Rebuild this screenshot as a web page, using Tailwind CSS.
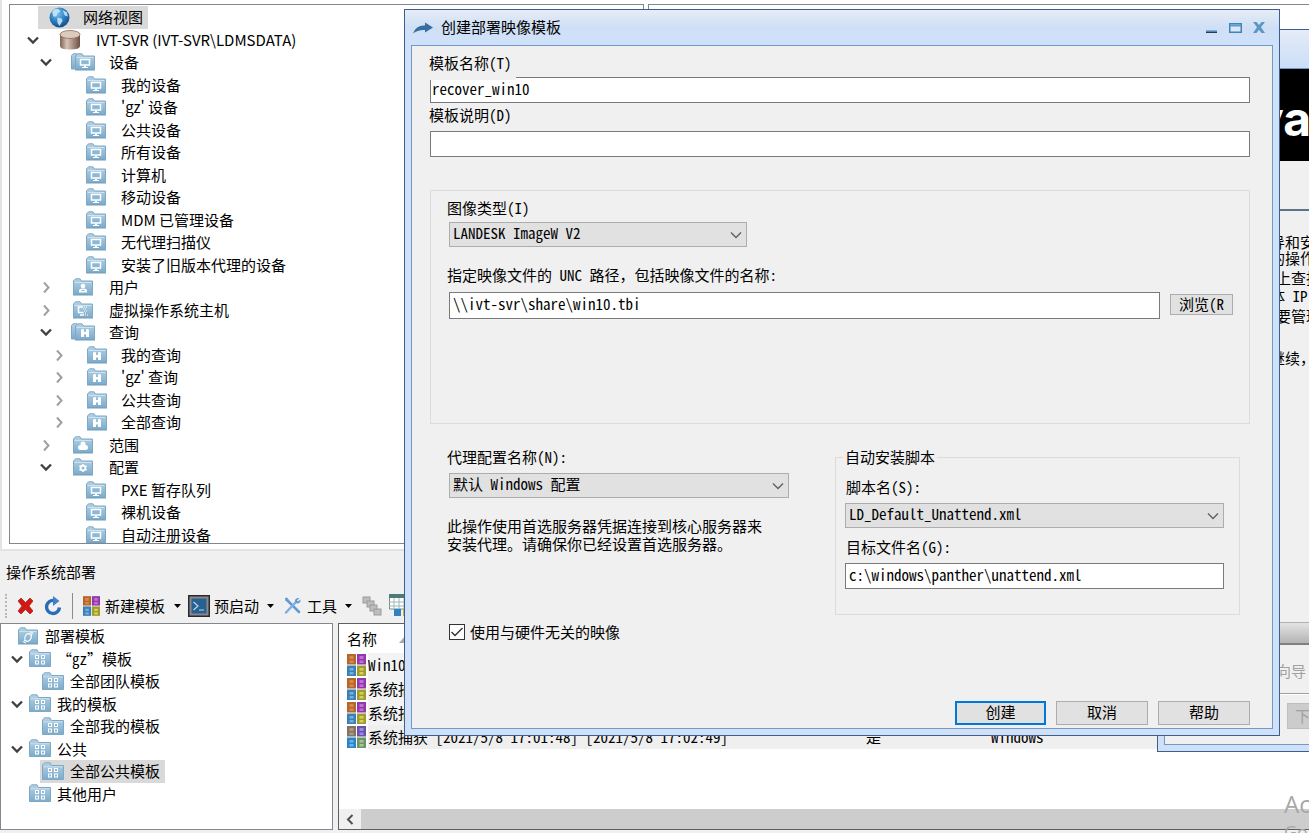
<!DOCTYPE html>
<html lang="zh-CN">
<head>
<meta charset="utf-8">
<title>创建部署映像模板</title>
<script src="https://cdn.jsdelivr.net/npm/@tailwindcss/browser@4"></script>
</head>
<body class="font-['Noto_Sans_CJK_SC',sans-serif] text-[15px] leading-4 text-black">
<svg width="0" height="0" class="absolute" aria-hidden="true">
  <defs>
    <linearGradient id="fg" x1="0" y1="0" x2="0" y2="1"><stop offset="0" stop-color="#b4d2e6"/><stop offset="1" stop-color="#7cabcb"/></linearGradient>
    <radialGradient id="globe" cx=".4" cy=".3" r=".8"><stop offset="0" stop-color="#7cc3ee"/><stop offset=".5" stop-color="#2d7fc0"/><stop offset="1" stop-color="#0b4076"/></radialGradient>
    <linearGradient id="db" x1="0" x2="1"><stop offset="0" stop-color="#7d6152"/><stop offset=".35" stop-color="#d9c3b5"/><stop offset="1" stop-color="#6b5041"/></linearGradient>
  </defs>
  <symbol id="folder" viewBox="0 0 20 18"><path d="M.5 16.500V3L2.500 .8H7L8.500 3H19.500V16.500Z" fill="url(#fg)" stroke="#7fa8c4"/><path d="M1.500 4.500H18.500" stroke="#cfe2ef" fill="none"/><path d="M0 17H20" stroke="#6f9dbd"/></symbol>
  <symbol id="folder-pc" viewBox="0 0 20 18"><use href="#folder" width="20" height="18"/><rect x="5.500" y="6.500" width="9" height="5.500" fill="#8ab8d6" stroke="#fff" stroke-width="1.500"/><path d="M9 12.500H11V14H13V15H7V14H9Z" fill="#fff"/></symbol>
  <symbol id="folders-pc" viewBox="0 0 24 18"><path d="M.5 16V2.500L2 .8H6L7.500 2.500H12V16Z" fill="url(#fg)" stroke="#7fa8c4"/><use href="#folder-pc" x="4" width="20" height="18"/></symbol>
  <symbol id="folder-q" viewBox="0 0 20 18"><use href="#folder" width="20" height="18"/><path d="M6 7L7 6H8.500L9 7V9H11V7L11.500 6H13L14 7V14H11V11.500H9V14H6Z" fill="#fff"/></symbol>
  <symbol id="folders-q" viewBox="0 0 24 18"><path d="M.5 16V2.500L2 .8H6L7.500 2.500H12V16Z" fill="url(#fg)" stroke="#7fa8c4"/><use href="#folder-q" x="4" width="20" height="18"/></symbol>
  <symbol id="folder-user" viewBox="0 0 20 18"><use href="#folder" width="20" height="18"/><circle cx="10" cy="8" r="2.300" fill="#fff"/><path d="M6 14.500V12.500Q6 10.500 10 10.500T14 12.500V14.500Z" fill="#fff"/><path d="M8.500 12.500H11.500" stroke="#8ab8d6"/></symbol>
  <symbol id="folder-vm" viewBox="0 0 20 18"><use href="#folder" width="20" height="18"/><path d="M10 6H5.500V11.500H10M7 14H11" stroke="#fff" stroke-width="1.500" fill="none"/><path d="M11 6H15M10 8H14M11 10H15M10 12H14M12 14H15" stroke="#fff" stroke-dasharray="1 1"/></symbol>
  <symbol id="folder-scope" viewBox="0 0 20 18"><use href="#folder" width="20" height="18"/><circle cx="10" cy="8" r="2.500" fill="#fff"/><circle cx="7.500" cy="11.500" r="2.500" fill="#fff"/><circle cx="12.500" cy="11.500" r="2.500" fill="#fff"/><path d="M7 11H13V14H7Z" fill="#fff"/></symbol>
  <symbol id="folder-gear" viewBox="0 0 20 18"><use href="#folder" width="20" height="18"/><circle cx="10" cy="10" r="2.400" fill="none" stroke="#fff" stroke-width="1.800"/><path d="M10 6V8M10 12V14M6.500 8L8.300 9M11.700 11L13.500 12M6.500 12L8.300 11M11.700 9L13.500 8" stroke="#fff" stroke-width="1.500"/></symbol>
  <symbol id="folder-sync" viewBox="0 0 20 18"><use href="#folder" width="20" height="18"/><ellipse cx="10" cy="10.500" rx="3" ry="4" fill="none" stroke="#fff" stroke-width="1.200" transform="rotate(25 10 10.500)"/><path d="M12 5L14.500 5.500L13.500 8M8 16L5.500 15L7 13" stroke="#fff" fill="none"/></symbol>
  <symbol id="folder-tpl" viewBox="0 0 22 19"><path d="M.5 17.500V3L2.500 .8H8L9.500 3.500H21.500V17.500Z" fill="url(#fg)" stroke="#7fa8c4"/><path d="M1.500 4.800H20.500" stroke="#cfe2ef"/><g fill="#8ab8d6" stroke="#fff"><rect x="6.500" y="6.500" width="3" height="3"/><rect x="12.500" y="6.500" width="3" height="3"/><rect x="6.500" y="12" width="3" height="3"/><rect x="12.500" y="12" width="3" height="3"/></g></symbol>
  <symbol id="down" viewBox="0 0 14 14"><path d="M2 4.500L7 9.500L12 4.500" fill="none" stroke="#404040" stroke-width="2.300"/></symbol>
  <symbol id="right" viewBox="0 0 14 14"><path d="M5 2.500L9.500 7.500L5 12.500" fill="none" stroke="#a0a0a0" stroke-width="2"/></symbol>
  <symbol id="four" viewBox="0 0 19 22"><rect x="0" y="0" width="9" height="10.500" fill="#b8652a"/><rect x="10" y="0" width="9" height="10.500" fill="#9138ad"/><rect x="0" y="11.500" width="9" height="10.500" fill="#3a7fb5"/><rect x="10" y="11.500" width="9" height="10.500" fill="#a09a32"/><g><path d="M2.500 2H6.500V5H2.500ZM2.500 6.500H6.500V9H2.500Z" fill="#d08c50"/><path d="M12.500 2H16.500V5H12.500ZM12.500 6.500H16.500V9H12.500Z" fill="#c070d4"/><path d="M2.500 14H6.500V16.500H2.500ZM2.500 18H6.500V20.500H2.500Z" fill="#70b0dc"/><path d="M12.500 14H16.500V16.500H12.500ZM12.500 18H16.500V20.500H12.500Z" fill="#d6d24c"/></g></symbol>
  <symbol id="four-sel" viewBox="0 0 19 22"><rect width="9" height="10.500" fill="#857360"/><rect x="10" width="9" height="10.500" fill="#6a50b0"/><rect y="11.500" width="9" height="10.500" fill="#2d82c4"/><rect x="10" y="11.500" width="9" height="10.500" fill="#6c9468"/><path d="M2.500 2H6.500V5H2.500ZM2.500 6.500H6.500V9H2.500Z" fill="#a89a88"/><path d="M12.500 2H16.500V5H12.500ZM12.500 6.500H16.500V9H12.500Z" fill="#9c88dc"/><path d="M2.500 14H6.500V16.500H2.500ZM2.500 18H6.500V20.500H2.500Z" fill="#6ab4ee"/><path d="M12.500 14H16.500V16.500H12.500ZM12.500 18H16.500V20.500H12.500Z" fill="#a4c890"/></symbol>
  <symbol id="combo" viewBox="0 0 12 8"><path d="M1 1.500L6 6.500L11 1.500" fill="none" stroke="#606060" stroke-width="1.400"/></symbol>
  <symbol id="tri" viewBox="0 0 7 4"><path d="M0 0H7L3.500 4Z" fill="#000"/></symbol>
</svg>

<div class="relative flex h-screen flex-col overflow-hidden bg-[#f0f0f0]">
  <!-- network view -->
  <main class="flex h-[551px] shrink-0 gap-1 border-b-2 border-l-2 border-[#e3e3e3] bg-white pt-1 pb-[5px] pl-[7px]">
    <nav class="w-[635px] shrink-0 overflow-hidden border border-[#828790]" aria-label="网络视图">
      <ul class="mt-px flex h-[540px] flex-col whitespace-nowrap">
        <li class="flex flex-1 items-center"><span class="ml-7 flex h-full items-center bg-[#d9d9d9] pr-[5px] pl-2"><svg class="mr-[13px] ml-[3px] size-[21px]" viewBox="0 0 20 20"><circle cx="10" cy="10" r="9.500" fill="url(#globe)"/><path d="M3 4Q6 1 9 2L11 4L8 6L7 9L4 9ZM8 10L12 11L13 13L10 18L8 15ZM13 3L17 5L18 9L15 8Z" fill="#cfeafc" opacity=".85"/></svg>网络视图</span></li>
        <li class="flex flex-1 items-center pl-4"><span class="w-8"><svg class="size-[14px]"><use href="#down"/></svg></span><svg class="mr-[14px] h-5 w-6" viewBox="0 0 24 20"><path d="M2 4V16Q2 19.500 12 19.500T22 16V4Z" fill="url(#db)"/><ellipse cx="12" cy="4.500" rx="10" ry="4" fill="#dccabd" stroke="#8a6f5f" stroke-width=".8"/></svg>IVT-SVR (IVT-SVR\LDMSDATA)</li>
        <li class="flex flex-1 items-center pl-[29px]"><span class="w-8"><svg class="size-[14px]"><use href="#down"/></svg></span><svg class="mr-[14px] h-[18px] w-6"><use href="#folders-pc"/></svg>设备</li>
        <li class="flex flex-1 items-center pl-[74px]"><svg class="mr-[13px] h-[18px] w-6"><use href="#folder-pc"/></svg>我的设备</li>
        <li class="flex flex-1 items-center pl-[74px]"><svg class="mr-[13px] h-[18px] w-6"><use href="#folder-pc"/></svg>'gz' 设备</li>
        <li class="flex flex-1 items-center pl-[74px]"><svg class="mr-[13px] h-[18px] w-6"><use href="#folder-pc"/></svg>公共设备</li>
        <li class="flex flex-1 items-center pl-[74px]"><svg class="mr-[13px] h-[18px] w-6"><use href="#folder-pc"/></svg>所有设备</li>
        <li class="flex flex-1 items-center pl-[74px]"><svg class="mr-[13px] h-[18px] w-6"><use href="#folder-pc"/></svg>计算机</li>
        <li class="flex flex-1 items-center pl-[74px]"><svg class="mr-[13px] h-[18px] w-6"><use href="#folder-pc"/></svg>移动设备</li>
        <li class="flex flex-1 items-center pl-[74px]"><svg class="mr-[13px] h-[18px] w-6"><use href="#folder-pc"/></svg>MDM 已管理设备</li>
        <li class="flex flex-1 items-center pl-[74px]"><svg class="mr-[13px] h-[18px] w-6"><use href="#folder-pc"/></svg>无代理扫描仪</li>
        <li class="flex flex-1 items-center pl-[74px]"><svg class="mr-[13px] h-[18px] w-6"><use href="#folder-pc"/></svg>安装了旧版本代理的设备</li>
        <li class="flex flex-1 items-center pl-[29px]"><span class="w-8"><svg class="size-[14px]"><use href="#right"/></svg></span><svg class="mr-[14px] h-[18px] w-6"><use href="#folder-user"/></svg>用户</li>
        <li class="flex flex-1 items-center pl-[29px]"><span class="w-8"><svg class="size-[14px]"><use href="#right"/></svg></span><svg class="mr-[14px] h-[18px] w-6"><use href="#folder-vm"/></svg>虚拟操作系统主机</li>
        <li class="flex flex-1 items-center pl-[29px]"><span class="w-8"><svg class="size-[14px]"><use href="#down"/></svg></span><svg class="mr-[14px] h-[18px] w-6"><use href="#folders-q"/></svg>查询</li>
        <li class="flex flex-1 items-center pl-[42px]"><span class="w-[33px]"><svg class="size-[14px]"><use href="#right"/></svg></span><svg class="mr-3 h-[18px] w-6"><use href="#folder-q"/></svg>我的查询</li>
        <li class="flex flex-1 items-center pl-[42px]"><span class="w-[33px]"><svg class="size-[14px]"><use href="#right"/></svg></span><svg class="mr-3 h-[18px] w-6"><use href="#folder-q"/></svg>'gz' 查询</li>
        <li class="flex flex-1 items-center pl-[42px]"><span class="w-[33px]"><svg class="size-[14px]"><use href="#right"/></svg></span><svg class="mr-3 h-[18px] w-6"><use href="#folder-q"/></svg>公共查询</li>
        <li class="flex flex-1 items-center pl-[42px]"><span class="w-[33px]"><svg class="size-[14px]"><use href="#right"/></svg></span><svg class="mr-3 h-[18px] w-6"><use href="#folder-q"/></svg>全部查询</li>
        <li class="flex flex-1 items-center pl-[29px]"><span class="w-8"><svg class="size-[14px]"><use href="#right"/></svg></span><svg class="mr-[14px] h-[18px] w-6"><use href="#folder-scope"/></svg>范围</li>
        <li class="flex flex-1 items-center pl-[29px]"><span class="w-8"><svg class="size-[14px]"><use href="#down"/></svg></span><svg class="mr-[14px] h-[18px] w-6"><use href="#folder-gear"/></svg>配置</li>
        <li class="flex flex-1 items-center pl-[74px]"><svg class="mr-[13px] h-[18px] w-6"><use href="#folder-pc"/></svg>PXE 暂存队列</li>
        <li class="flex flex-1 items-center pl-[74px]"><svg class="mr-[13px] h-[18px] w-6"><use href="#folder-pc"/></svg>裸机设备</li>
        <li class="flex flex-1 items-center pl-[74px]"><svg class="mr-[13px] h-[18px] w-6"><use href="#folder-pc"/></svg>自动注册设备</li>
      </ul>
    </nav>
    <div class="flex-1 border-t border-l border-[#828790]"></div>
  </main>

  <!-- OS deployment -->
  <section class="flex min-h-0 flex-1 flex-col pb-[3px]">
    <h2 class="mt-[13px] pl-[6px]">操作系统部署</h2>
    <div class="mt-2 flex h-[35px] shrink-0 items-center whitespace-nowrap">
      <span class="ml-[5px] h-6 w-[3px] border-l-2 border-dotted border-[#b8b8b8]"></span>
      <button aria-label="删除" class="ml-[9px]"><svg class="h-4 w-[17px]" viewBox="0 0 17 16"><path d="M1 3L4 0L8.500 4.500L13 0L16 3L12 8L16 13L13 16L8.500 11.500L4 16L1 13L5 8Z" fill="#d11a14" stroke="#9b0d0d" stroke-width=".6"/></svg></button>
      <button aria-label="刷新" class="ml-[10px]"><svg class="h-5 w-[18px]" viewBox="0 0 18 20"><path d="M10 4.500A6.500 6.500 0 1 0 15.500 11.500" fill="none" stroke="#2b6cb8" stroke-width="3.400"/><path d="M9 0L15.500 5L9 10Z" fill="#3f80c8"/></svg></button>
      <span class="ml-[10px] h-[26px] w-px bg-[#8c8c8c]"></span>
      <button class="ml-[10px] flex items-center gap-[5px]"><svg class="h-5 w-[17px]"><use href="#four"/></svg>新建模板<svg class="ml-1 h-1 w-[7px]"><use href="#tri"/></svg></button>
      <button class="ml-[7px] flex items-center gap-1"><svg class="size-[22px]" viewBox="0 0 22 22"><rect width="22" height="22" fill="#2a2a2e"/><rect x="1.500" y="1.500" width="19" height="19" fill="#8a8a8e"/><rect x="3.500" y="3.500" width="15" height="15" fill="#28608f"/><path d="M5.500 7L10 11L5.500 15M11 15H16" stroke="#b8d8f0" stroke-width="1.200" fill="none"/></svg>预启动<svg class="ml-1 h-1 w-[7px]"><use href="#tri"/></svg></button>
      <button class="ml-[10px] flex items-center gap-[6px]"><svg class="size-[17px]" viewBox="0 0 17 17"><path d="M4 4L15 15" stroke="#5e9bd6" stroke-width="2.500" stroke-linecap="round"/><path d="M1 1L3 .5L5 3L4 5L1.500 4Z" fill="#5e9bd6"/><path d="M2 15.500L12 5" stroke="#7db0e2" stroke-width="2.500" stroke-linecap="round"/><path d="M15.500 1L13 3.500L14 4.500L16.500 2.500Q17 6 13.500 6.500Q10.500 6 11 3Q12 .5 15.500 1Z" fill="#5e9bd6"/></svg>工具<svg class="ml-[2px] h-1 w-[7px]"><use href="#tri"/></svg></button>
      <svg class="ml-[10px] size-5" viewBox="0 0 20 20" fill="#bdbdbd" stroke="#9a9a9a"><rect x="1" y="1" width="7" height="6"/><rect x="5" y="5" width="7" height="6"/><rect x="8" y="9" width="7" height="6"/><rect x="12" y="13" width="7" height="6"/></svg>
      <svg class="ml-[7px] h-[23px] w-6" viewBox="0 0 24 23"><path d="M.5 .5H23.500V15H.5Z" fill="#fff" stroke="#6a8f8c"/><path d="M0 0H24V4H0Z" fill="#4d7d78"/><path d="M0 8H24M0 12H24M5 4V15M10 4V15M15 4V15" stroke="#9fb9b6"/><path d="M5 15H12V22H5Z" fill="#2f83c4"/><path d="M14 15H21V22H14Z" fill="#d8a92f"/></svg>
    </div>
    <div class="flex min-h-0 flex-1 gap-[5px]">
      <nav class="w-[333px] shrink-0 border border-[#828790] bg-white" aria-label="部署模板">
        <ul class="mt-px flex h-[180px] flex-col whitespace-nowrap">
          <li class="flex flex-1 items-center pl-[17px]"><svg class="mr-[7px] h-[18px] w-5"><use href="#folder-sync"/></svg>部署模板</li>
          <li class="flex flex-1 items-center pl-[9px]"><svg class="mr-[5px] size-[14px]"><use href="#down"/></svg><svg class="mr-[6px] h-[19px] w-[22px]"><use href="#folder-tpl"/></svg><span class="font-['Noto_Sans_Mono_CJK_SC','Noto_Sans_CJK_SC',monospace]">“gz”模板</span></li>
          <li class="flex flex-1 items-center pl-[41px]"><svg class="mr-[6px] h-[19px] w-[22px]"><use href="#folder-tpl"/></svg>全部团队模板</li>
          <li class="flex flex-1 items-center pl-[9px]"><svg class="mr-[5px] size-[14px]"><use href="#down"/></svg><svg class="mr-[6px] h-[19px] w-[22px]"><use href="#folder-tpl"/></svg>我的模板</li>
          <li class="flex flex-1 items-center pl-[41px]"><svg class="mr-[6px] h-[19px] w-[22px]"><use href="#folder-tpl"/></svg>全部我的模板</li>
          <li class="flex flex-1 items-center pl-[9px]"><svg class="mr-[5px] size-[14px]"><use href="#down"/></svg><svg class="mr-[6px] h-[19px] w-[22px]"><use href="#folder-tpl"/></svg>公共</li>
          <li class="flex flex-1 items-center pl-[39px]"><span class="flex h-full items-center bg-[#d9d9d9] pr-[5px] pl-[2px]"><svg class="mr-[6px] h-[19px] w-[22px]"><use href="#folder-tpl"/></svg>全部公共模板</span></li>
          <li class="flex flex-1 items-center pl-7"><svg class="mr-[6px] h-[19px] w-[22px]"><use href="#folder-tpl"/></svg>其他用户</li>
        </ul>
      </nav>
      <div class="flex min-w-0 flex-1 flex-col justify-between border border-r-0 border-[#606060] bg-white font-['Noto_Sans_Mono_CJK_SC','Noto_Sans_CJK_SC',monospace]">
        <table class="w-full table-fixed border-collapse text-left whitespace-nowrap">
          <thead><tr class="h-[29px]">
            <th class="w-[527px] pl-2 font-normal"><span class="flex items-center gap-[22px]">名称<svg class="h-2 w-[14px]" viewBox="0 0 14 8"><path d="M7 0L14 8H0Z" fill="#a8a8a8"/></svg></span></th>
            <th class="w-[125px]"></th><th></th></tr></thead>
          <tbody>
            <tr class="h-6"><td class="pl-2"><span class="flex h-6 items-center"><svg class="mr-[2px] h-[22px] w-[19px]"><use href="#four"/></svg><span class="flex h-6 flex-1 items-center bg-[#f3f3f3]">Win10</span></span></td><td class="bg-[#f3f3f3]"></td><td class="bg-[#f3f3f3]"></td></tr>
            <tr class="h-6"><td class="pl-2"><span class="flex h-6 items-center"><svg class="mr-[2px] h-[22px] w-[19px]"><use href="#four"/></svg><span class="flex h-6 flex-1 items-center bg-[#f3f3f3]">系统捕获</span></span></td><td class="bg-[#f3f3f3]"></td><td class="bg-[#f3f3f3]"></td></tr>
            <tr class="h-6"><td class="pl-2"><span class="flex h-6 items-center"><svg class="mr-[2px] h-[22px] w-[19px]"><use href="#four"/></svg><span class="flex h-6 flex-1 items-center bg-[#f3f3f3]">系统捕获</span></span></td><td class="bg-[#f3f3f3]"></td><td class="bg-[#f3f3f3]"></td></tr>
            <tr class="h-6"><td class="pl-2"><span class="flex h-6 items-center"><svg class="mr-[2px] h-[22px] w-[19px]"><use href="#four-sel"/></svg><span class="flex h-6 flex-1 items-center bg-[#efefef]">系统捕获 [2021/5/8 17:01:48] [2021/5/8 17:02:49]</span></span></td><td class="bg-[#efefef]">是</td><td class="bg-[#efefef]">Windows</td></tr>
          </tbody>
        </table>
        <div class="flex h-5 bg-[#cdcdcd]"><button aria-label="向左滚动" class="flex w-[22px] items-center justify-center bg-[#f0f0f0]"><svg class="h-[11px] w-2" viewBox="0 0 8 11"><path d="M6.500 1L2 5.500L6.500 10" fill="none" stroke="#505050" stroke-width="2"/></svg></button></div>
      </div>
    </div>
  </section>

  <!-- OS watermark at the screen corner -->
  <div class="absolute top-[790px] left-[1284px] font-['Open_Sans',sans-serif] whitespace-nowrap text-[#a8a8a8]"><p class="text-2xl leading-7">Ac</p><p class="mt-[2px] text-lg leading-6">Go</p></div>

  <!-- wizard window behind the dialog -->
  <div class="absolute top-[29px] -right-[400px] left-[1157px] h-[723px] border border-[#3d5f8f] bg-[#cfe0f7] px-[6px] pb-[7px] font-['Noto_Sans_Mono_CJK_SC','Noto_Sans_CJK_SC',monospace] whitespace-nowrap">
    <div class="-mx-[6px] h-[38px] bg-linear-to-b from-[#e4ecf7] to-[#cbdef8]"></div>
    <div class="flex h-[677px] flex-col border border-[#6f98cc] bg-[#f0f0f0] pl-[105px]">
      <div class="-ml-[105px] flex h-[92px] items-center bg-black pl-[90px] font-['Inter',sans-serif] text-[48px] leading-[48px] font-bold text-white"><span class="pt-2">va</span></div>
      <div class="-ml-[105px] h-[50px] border-b-2 border-[#5d7387]"></div>
      <p class="mt-[23px]">导和安</p>
      <p>的操作</p>
      <p class="mt-1 pl-[6px]">上查找</p>
      <p class="mt-[2px]">体 IP</p>
      <p class="mt-1 pl-[6px]">要管理</p>
      <p class="mt-[26px]">继续，</p>
      <div class="mt-auto -ml-[105px] h-[23px] border-t border-b-2 border-t-[#b0b0b0] border-b-[#808080] bg-linear-to-b from-[#e4e4e4] to-[#b4b4b4]"></div>
      <p class="mt-[18px] pl-[6px] text-[#a0a0a0]">向导</p>
      <div class="mt-[14px] -ml-[105px] h-[2px] border-t border-[#a0a0a0] bg-white"></div>
      <button class="mt-2 mb-[15px] ml-[17px] h-[26px] w-[90px] shrink-0 border border-[#bfbfbf] bg-[#cccccc] pl-[7px] text-left text-[#a0a0a0]">下</button>
    </div>
  </div>

  <!-- create template dialog -->
  <div role="dialog" aria-labelledby="dlg" class="absolute top-[9px] right-[29px] left-[404px] border border-[#3d5f8f] bg-[#cfe0f7] font-['Noto_Sans_Mono_CJK_SC','Noto_Sans_CJK_SC',monospace]">
    <header class="flex h-[35px] items-center bg-linear-to-b from-[#e6edf7] via-[#cfdff5] to-[#cfe1fb] pr-[14px] pl-2">
      <svg class="mr-2 h-3 w-5" viewBox="0 0 20 12"><path d="M0 11.500Q3 3 12 3.500V.5L20 5.500L12 10.500V8Q5 7.500 0 11.500Z" fill="#3a6ea0"/></svg>
      <h1 id="dlg" class="flex-1 pb-px">创建部署映像模板</h1>
      <button aria-label="最小化" class="mr-3"><svg class="size-3" viewBox="0 0 12 12"><path d="M1 8H12V9.500H1Z" fill="#7fb0d8"/><path d="M1 9.500H12V11H1Z" fill="#1e3f5c"/></svg></button>
      <button aria-label="最大化" class="mr-[11px]"><svg class="h-[10px] w-[13px]" viewBox="0 0 13 10"><rect x=".75" y=".75" width="11.500" height="8.500" fill="#d8e8f8" stroke="#3f83b8" stroke-width="1.500"/><path d="M1 2.500H12" stroke="#5a9ccb" stroke-width="2"/></svg></button>
      <button aria-label="关闭"><svg class="h-[11px] w-3" viewBox="0 0 12 11"><path d="M0 0H3.500L6 3L8.500 0H12L8 5.300L12 11H8.500L6 7.800L3.500 11H0L4 5.300Z" fill="#5c97c4"/></svg></button>
    </header>
    <form class="mx-[6px] mb-[6px] border border-[#6f98cc] bg-[#f0f0f0] pt-[9px] pr-[22px] pb-[3px] pl-[18px]">
      <label for="name" class="relative -ml-px block h-[25px] w-[87px] bg-[#f0f0f0]">模板名称(T)</label>
      <input id="name" value="recover_win10" class="-mt-[3px] block h-[26px] w-full border border-[#7a7a7a] bg-white px-px pb-1">
      <label for="desc" class="mt-1 -ml-px block">模板说明(D)</label>
      <input id="desc" class="mt-2 block h-[26px] w-full border border-[#7a7a7a] bg-white px-px">

      <div class="mt-[33px] h-[234px] border border-[#dcdcdc] px-4 pt-[9px]">
        <label for="type" class="block">图像类型(I)</label>
        <div class="relative mt-[6px] ml-[2px] w-[298px]">
          <select id="type" class="block h-[25px] w-full appearance-none border border-[#adadad] bg-[#e1e1e1] pb-[3px] pl-[3px] leading-5"><option>LANDESK ImageW V2</option></select>
          <svg class="pointer-events-none absolute top-[9px] right-[5px] h-2 w-3"><use href="#combo"/></svg>
        </div>
        <label for="path" class="mt-5 block">指定映像文件的 UNC 路径，包括映像文件的名称:</label>
        <div class="mt-[9px] ml-[2px] flex items-start gap-[10px]">
          <input id="path" value="\\ivt-svr\share\win10.tbi" class="h-[27px] min-w-0 flex-1 border border-[#7a7a7a] bg-white px-[3px] pb-1">
          <button type="button" class="mt-[2px] h-[21px] w-[63px] border border-[#adadad] bg-[#e1e1e1] pb-px leading-4">浏览(R</button>
        </div>
      </div>

      <div class="mt-[25px] flex items-start">
        <div class="flex-1 pl-[17px]">
          <label for="agent" class="block">代理配置名称(N):</label>
          <div class="relative mt-2 ml-[2px] w-[340px]">
            <select id="agent" class="block h-[25px] w-full appearance-none border border-[#adadad] bg-[#e1e1e1] pb-[3px] pl-[3px] leading-5"><option>默认 Windows 配置</option></select>
            <svg class="pointer-events-none absolute top-[9px] right-[5px] h-2 w-3"><use href="#combo"/></svg>
          </div>
          <p class="mt-[19px] leading-[18px]">此操作使用首选服务器凭据连接到核心服务器来<br>安装代理。请确保你已经设置首选服务器。</p>
          <label class="mt-[71px] ml-[2px] flex items-center gap-[5px]">
            <span class="relative size-4"><input type="checkbox" checked class="block size-4 appearance-none border border-[#333] bg-white"><svg class="pointer-events-none absolute inset-0 size-4" viewBox="0 0 16 16"><path d="M2.500 8L6 11.500L13.500 4" fill="none" stroke="#333" stroke-width="1.400"/></svg></span>使用与硬件无关的映像</label>
        </div>
        <fieldset class="mr-[10px] h-[166px] w-[405px] border border-[#dcdcdc] pr-[15px] pl-[9px]">
          <legend class="-ml-[2px] px-[2px]">自动安装脚本</legend>
          <label for="script" class="mt-[14px] block pl-px">脚本名(S):</label>
          <div class="relative mt-2">
            <select id="script" class="block h-[25px] w-full appearance-none border border-[#adadad] bg-[#e1e1e1] pb-[3px] pl-[3px] leading-5"><option>LD_Default_Unattend.xml</option></select>
            <svg class="pointer-events-none absolute top-[9px] right-[5px] h-2 w-3"><use href="#combo"/></svg>
          </div>
          <label for="target" class="mt-[11px] block pl-px">目标文件名(G):</label>
          <input id="target" value="c:\windows\panther\unattend.xml" class="mt-2 block h-[26px] w-full border border-[#7a7a7a] bg-white px-[3px] pb-1">
        </fieldset>
      </div>

      <div class="mt-[61px] flex justify-end gap-[10px]">
        <button type="submit" class="h-6 w-[91px] border-2 border-[#0078d7] bg-[#e1e1e1] pb-[2px] leading-4">创建</button>
        <button type="button" class="h-6 w-[92px] border border-[#adadad] bg-[#e1e1e1] pb-[2px] leading-4">取消</button>
        <button type="button" class="h-6 w-[92px] border border-[#adadad] bg-[#e1e1e1] pb-[2px] leading-4">帮助</button>
      </div>
    </form>
  </div>
</div>
</body>
</html>
